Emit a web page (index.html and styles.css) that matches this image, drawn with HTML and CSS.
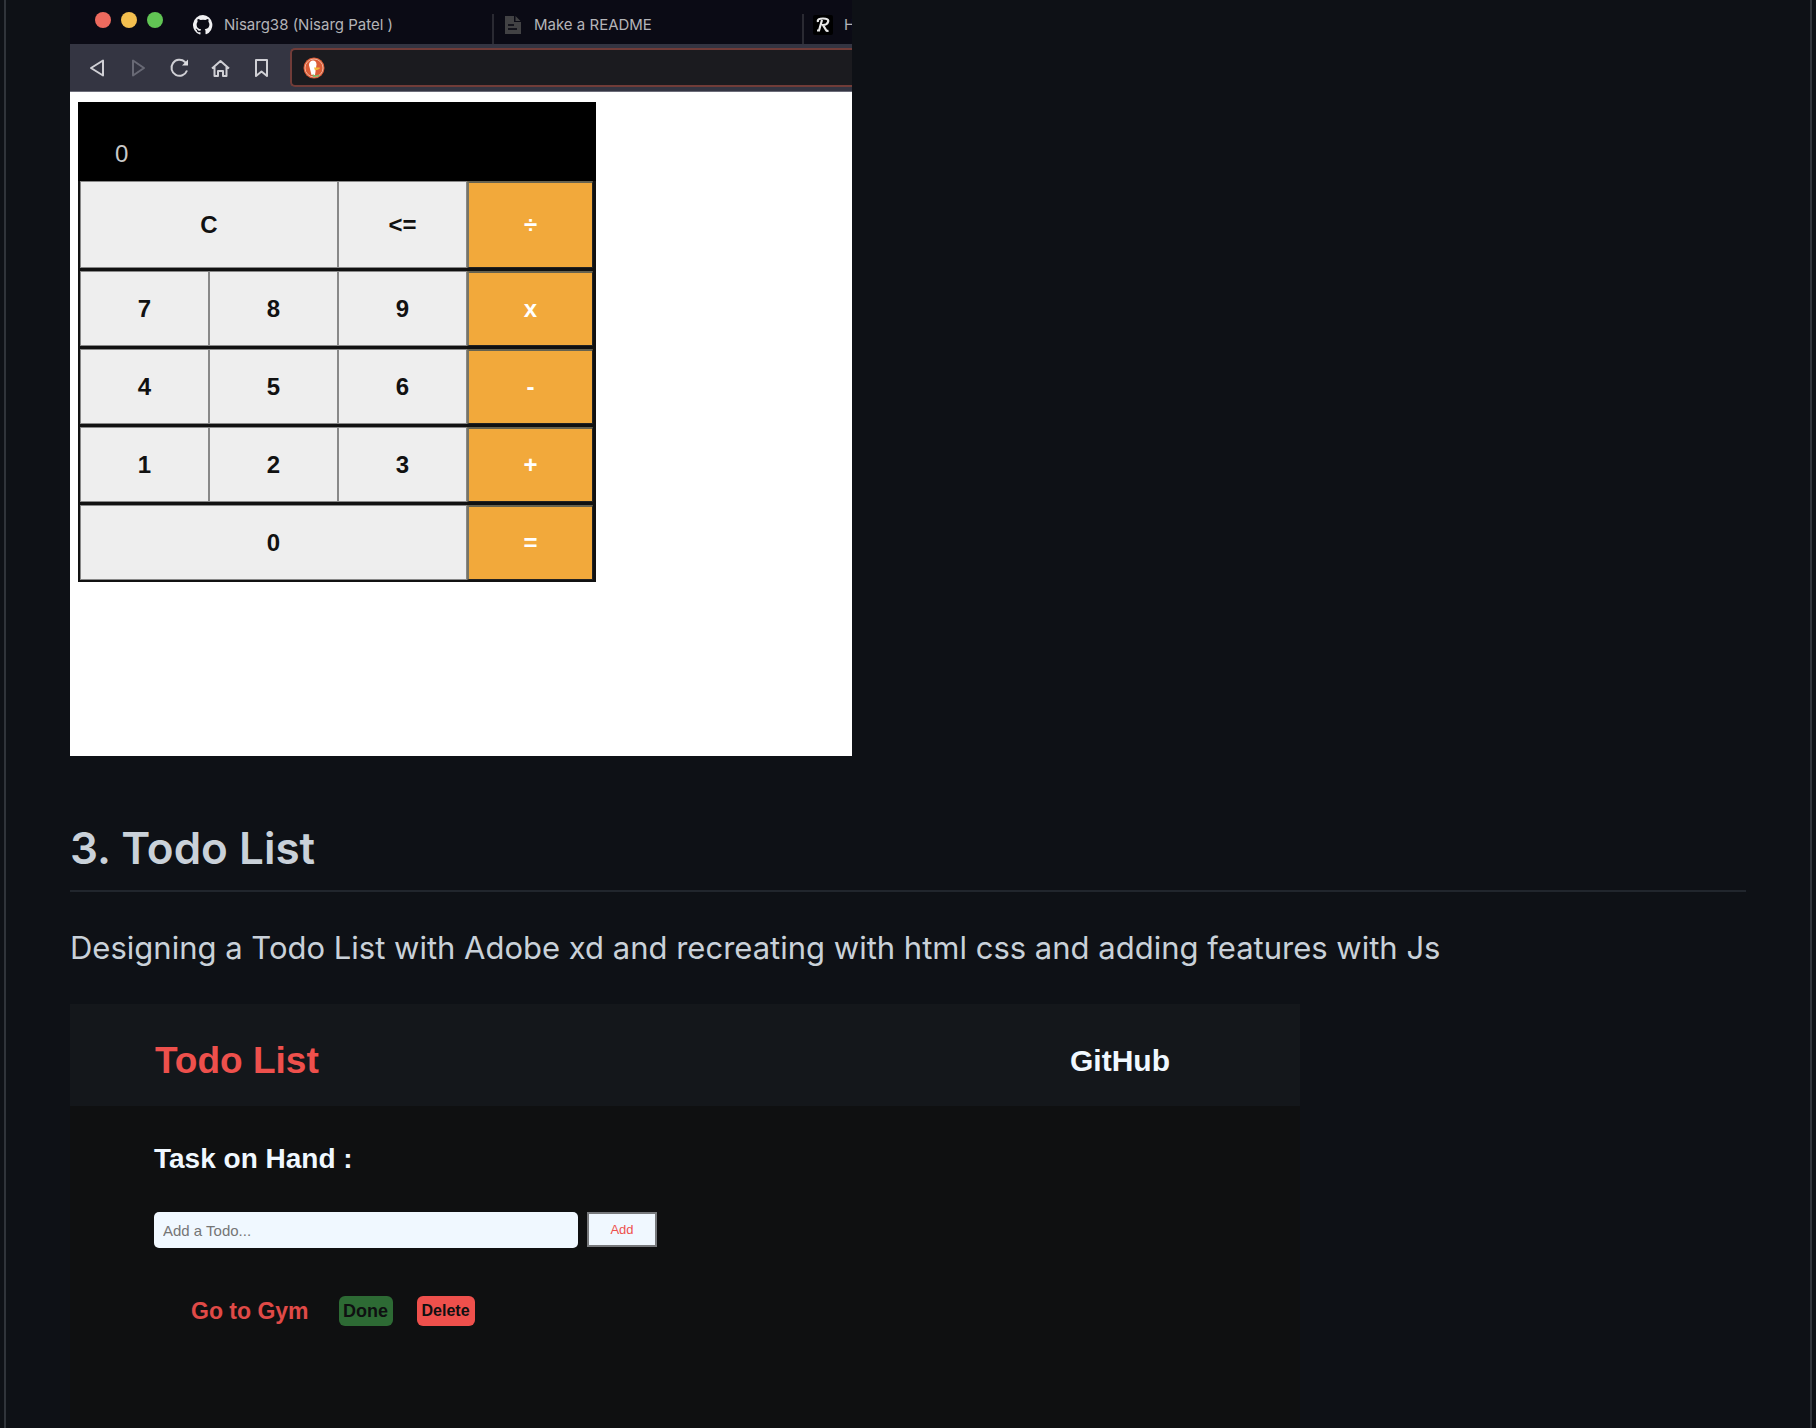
FILE: index.html
```html
<!DOCTYPE html>
<html lang="en">
<head>
<meta charset="utf-8">
<meta name="viewport" content="width=device-width, initial-scale=1">
<title>README</title>
<link rel="stylesheet" href="styles.css">
</head>
<body>
<main class="readme">
  <section class="browser" aria-label="Calculator preview">
    <div class="tabs">
      <div class="lights"><span class="light red"></span><span class="light yellow"></span><span class="light green"></span></div>
      <a class="tab first" href="#">
        <svg class="tab-icon" viewBox="0 0 16 16" fill="#f0f0f2"><path d="M8 0a8 8 0 0 0-2.5 15.6c.4.1.5-.2.5-.4v-1.500c-2 .4-2.600-.5-2.700-1-.1-.2-.5-.9-.8-1.100-.3-.2-.7-.6 0-.6.600 0 1.100.6 1.200.8.7 1.200 1.900.9 2.300.7.100-.5.3-.9.500-1.100-1.800-.2-3.600-.9-3.600-4 0-.9.300-1.600.8-2.100-.1-.2-.4-1 .1-2.100 0 0 .7-.2 2.200.8a7.500 7.500 0 0 1 4 0c1.500-1 2.200-.8 2.200-.8.400 1.100.2 1.900.1 2.100.5.6.8 1.300.8 2.100 0 3.100-1.900 3.700-3.700 3.900.300.3.600.8.600 1.500v2.200c0 .2.100.5.500.4A8 8 0 0 0 8 0z"/></svg>
        <span>Nisarg38 (Nisarg Patel )</span>
      </a>
      <a class="tab" href="#">
        <svg class="tab-icon" viewBox="0 0 20 20"><path d="M2 1h9v6h7v12H2z" fill="#424244"/><path d="M12.500 1l5 5h-5z" fill="#424244"/><path d="M5 10h6M5 14h9" stroke="#14141c" stroke-width="2"/></svg>
        <span>Make a README</span>
      </a>
      <a class="tab" href="#">
        <svg class="tab-icon" viewBox="0 0 20 20"><rect width="20" height="20" rx="2" fill="#000"/><path d="M5 7c-1-3 2-3.500 5-3.500 4 0 6 1 5 3.500-.6 2-3 3-5 3l3 5c.5 1 1.500 1 2.500.5M9 5L6 15.500M4 15.500h3" fill="none" stroke="#e8e8e8" stroke-width="2.200"/></svg>
        <span>H</span>
      </a>
    </div>
    <div class="toolbar">
      <button class="tool" aria-label="Back"><svg viewBox="0 0 24 24"><path d="M18 4.500v15L6 12z"/></svg></button>
      <button class="tool dim" aria-label="Forward"><svg viewBox="0 0 24 24"><path d="M7 4.500v15L18 12z"/></svg></button>
      <button class="tool" aria-label="Reload"><svg viewBox="0 0 24 24"><path d="M20 14.500a8 8 0 1 1-2-8.500l1.500 2"/><path d="M21 3.500v6h-6z" fill="#dcdce0" stroke="none"/></svg></button>
      <button class="tool" aria-label="Home"><svg viewBox="0 0 24 24"><path d="M4 12.500L12.500 5 21 12.500M6.500 11v9h3.500v-5h5v5h3.500v-9"/></svg></button>
      <button class="tool" aria-label="Bookmark"><svg viewBox="0 0 24 24"><path d="M7 4h11v16l-5.500-4.500L7 20z"/></svg></button>
      <div class="address">
        <svg class="duck" viewBox="0 0 22 22"><circle cx="11" cy="11" r="10.500" fill="#dc5c36"/><circle cx="11" cy="11" r="9" fill="none" stroke="#efb49f" stroke-width="1"/><path d="M8.500 18L6 8c0-3 2-4.500 4-4.500 2 0 3.500 1.500 3.500 4L12 18z" fill="#fff"/><path d="M11 10.500h5.500c1 .8 0 2-4.500 3z" fill="#f3b63b"/><path d="M9.500 17l3 1.500 3.500-1v2l-6 .5z" fill="#7fb865"/></svg>
        <input class="url" type="text" aria-label="Address">
      </div>
    </div>
    <div class="viewport">
      <div class="calc">
        <output class="display">0</output>
        <div class="keys">
          <button class="key double">C</button><button class="key">&lt;=</button><button class="key op">÷</button>
          <button class="key">7</button><button class="key">8</button><button class="key">9</button><button class="key op">x</button>
          <button class="key">4</button><button class="key">5</button><button class="key">6</button><button class="key op">-</button>
          <button class="key">1</button><button class="key">2</button><button class="key">3</button><button class="key op">+</button>
          <button class="key triple">0</button><button class="key op">=</button>
        </div>
      </div>
    </div>
  </section>

  <h2 class="title">3. Todo List</h2>
  <p class="intro">Designing a Todo List with Adobe xd and recreating with html css and adding features with Js</p>

  <section class="todo" aria-label="Todo List preview">
    <header class="todo-head">
      <h3 class="brand">Todo List</h3>
      <a class="github" href="#">GitHub</a>
    </header>
    <div class="todo-body">
      <h4 class="task-title">Task on Hand :</h4>
      <form class="add-form">
        <input class="add-input" type="text" placeholder="Add a Todo..." aria-label="Add a Todo">
        <button class="add-button" type="button">Add</button>
      </form>
      <div class="task">
        <span class="task-name">Go to Gym</span>
        <button class="done">Done</button>
        <button class="delete">Delete</button>
      </div>
    </div>
  </section>
</main>
</body>
</html>
```
FILE: styles.css
```css
* { box-sizing: border-box; }

body {
  margin: 0;
  background: #0e1116;
  color: #c9d1d9;
  font-family: Inter, "Noto Sans", sans-serif;
}

button, input { font: inherit; margin: 0; }
button { cursor: pointer; padding: 0; }
a { color: inherit; text-decoration: none; }

.readme {
  display: flex;
  flex-direction: column;
  height: 100vh;
  margin: 0 4px;
  padding: 0 64px;
  border: solid #30343a;
  border-width: 0 2px;
  overflow: hidden;
}

/* browser window */
.browser {
  flex: none;
  width: 100%;
  max-width: 782px;
  overflow: hidden;
  background: #fff;
}

.tabs {
  display: flex;
  align-items: flex-end;
  height: 44px;
  background: #0b0b15;
  overflow: hidden;
}

.lights {
  display: flex;
  flex: none;
  gap: 10px;
  width: 112px;
  height: 44px;
  padding: 12px 0 0 25px;
}

.light { width: 16px; height: 16px; border-radius: 50%; }
.red { background: #ed6a5e; }
.yellow { background: #f4bf4f; }
.green { background: #61c554; }

.tab {
  display: flex;
  flex: none;
  align-items: center;
  gap: 11px;
  width: 310px;
  height: 30px;
  padding: 0 0 8px 9px;
  border-left: 2px solid #2a2a32;
  color: #b4b4b8;
  font-size: 15px;
  line-height: 20px;
}

.tab.first { border-color: transparent; }
.tab-icon { width: 20px; height: 20px; }

.toolbar {
  display: flex;
  align-items: center;
  gap: 17px;
  height: 48px;
  padding-left: 15px;
  background: #343542;
  border-bottom: 1px solid #6b6c78;
}

.tool {
  flex: none;
  width: 24px;
  height: 24px;
  border: 0;
  background: none;
}

.tool svg {
  display: block;
  fill: none;
  stroke: #d0d0d5;
  stroke-width: 2;
  stroke-linejoin: round;
}

.tool.dim svg { stroke: #686975; }

.address {
  display: flex;
  flex: 1;
  align-items: center;
  gap: 12px;
  height: 39px;
  padding-left: 11px;
  border: 2px solid #713c38;
  border-right: 0;
  border-radius: 5px 0 0 5px;
  background: #1b1b1f;
}

.duck { flex: none; width: 22px; height: 22px; }

.url {
  flex: 1;
  min-width: 0;
  border: 0;
  background: none;
  color: #ddd;
  outline: 0;
}

.viewport { height: 664px; padding: 10px 8px; }

/* calculator */
.calc {
  max-width: 518px;
  background: #111;
  font-family: "Liberation Sans", Arial, sans-serif;
  font-size: 24px;
}

.display {
  display: flex;
  align-items: flex-end;
  height: 79px;
  padding: 0 37px 12px;
  background: #000;
  color: #c8c8c8;
  line-height: 30px;
}

.keys {
  display: grid;
  grid-template-columns: repeat(3, 129px) 1fr;
  grid-template-rows: 87px repeat(4, 75px);
  row-gap: 3px;
  padding: 0 3px 2px 2px;
}

.key {
  border: 1px solid #888;
  background: #eee;
  color: #111;
  font-weight: 700;
}

.double { grid-column: span 2; }
.triple { grid-column: span 3; }

.op {
  border-color: #66624f #222 #222 #777464;
  border-width: 2px 1px 1px 2px;
  background: #f2a93b;
  color: #fff;
}

/* text */
.title {
  flex: none;
  margin: 62px 0 32px;
  padding-bottom: 12px;
  border-bottom: 2px solid #21262d;
  font-size: 44px;
  font-weight: 600;
  line-height: 60px;
}

.intro {
  flex: none;
  margin: 0 0 32px;
  font-size: 31px;
  line-height: 48px;
}

/* todo app */
.todo {
  display: flex;
  flex: 1 0 auto;
  flex-direction: column;
  width: 100%;
  max-width: 1230px;
  background: #0f1011;
  color: #f0f8ff;
  font-family: "Liberation Sans", Arial, sans-serif;
}

.todo-head {
  display: flex;
  align-items: center;
  justify-content: space-between;
  height: 102px;
  padding: 12px 130px 0 85px;
  background: #14171b;
}

.brand { margin: 0; color: #ee504c; font-size: 37px; }
.github { font-size: 30px; font-weight: 700; }
.todo-body { padding: 36px 84px; }
.task-title { margin: 0 0 36px; font-size: 28px; line-height: 34px; }
.add-form { display: flex; gap: 9px; }

.add-input {
  flex: 0 1 424px;
  min-width: 0;
  height: 36px;
  padding: 0 9px;
  border: 0;
  border-radius: 5px;
  background: #f0f8ff;
  font-size: 15px;
}

.add-input::placeholder { color: #757575; }

.add-button {
  width: 70px;
  height: 35px;
  border: 2px solid #77797c;
  background: #f0f8ff;
  color: #ee504c;
  font-size: 13px;
}

.task {
  display: flex;
  align-items: center;
  gap: 24px;
  margin-top: 48px;
  padding-left: 37px;
  font-weight: 700;
}

.task-name { margin-right: 6px; color: #e04a47; font-size: 23px; line-height: 28px; }

.done, .delete {
  height: 30px;
  border: 0;
  border-radius: 6px;
  color: #0f1011;
}

.done { width: 54px; background: #2d6a34; font-size: 18px; }
.delete { width: 58px; background: #ee504c; font-size: 16px; }
```
